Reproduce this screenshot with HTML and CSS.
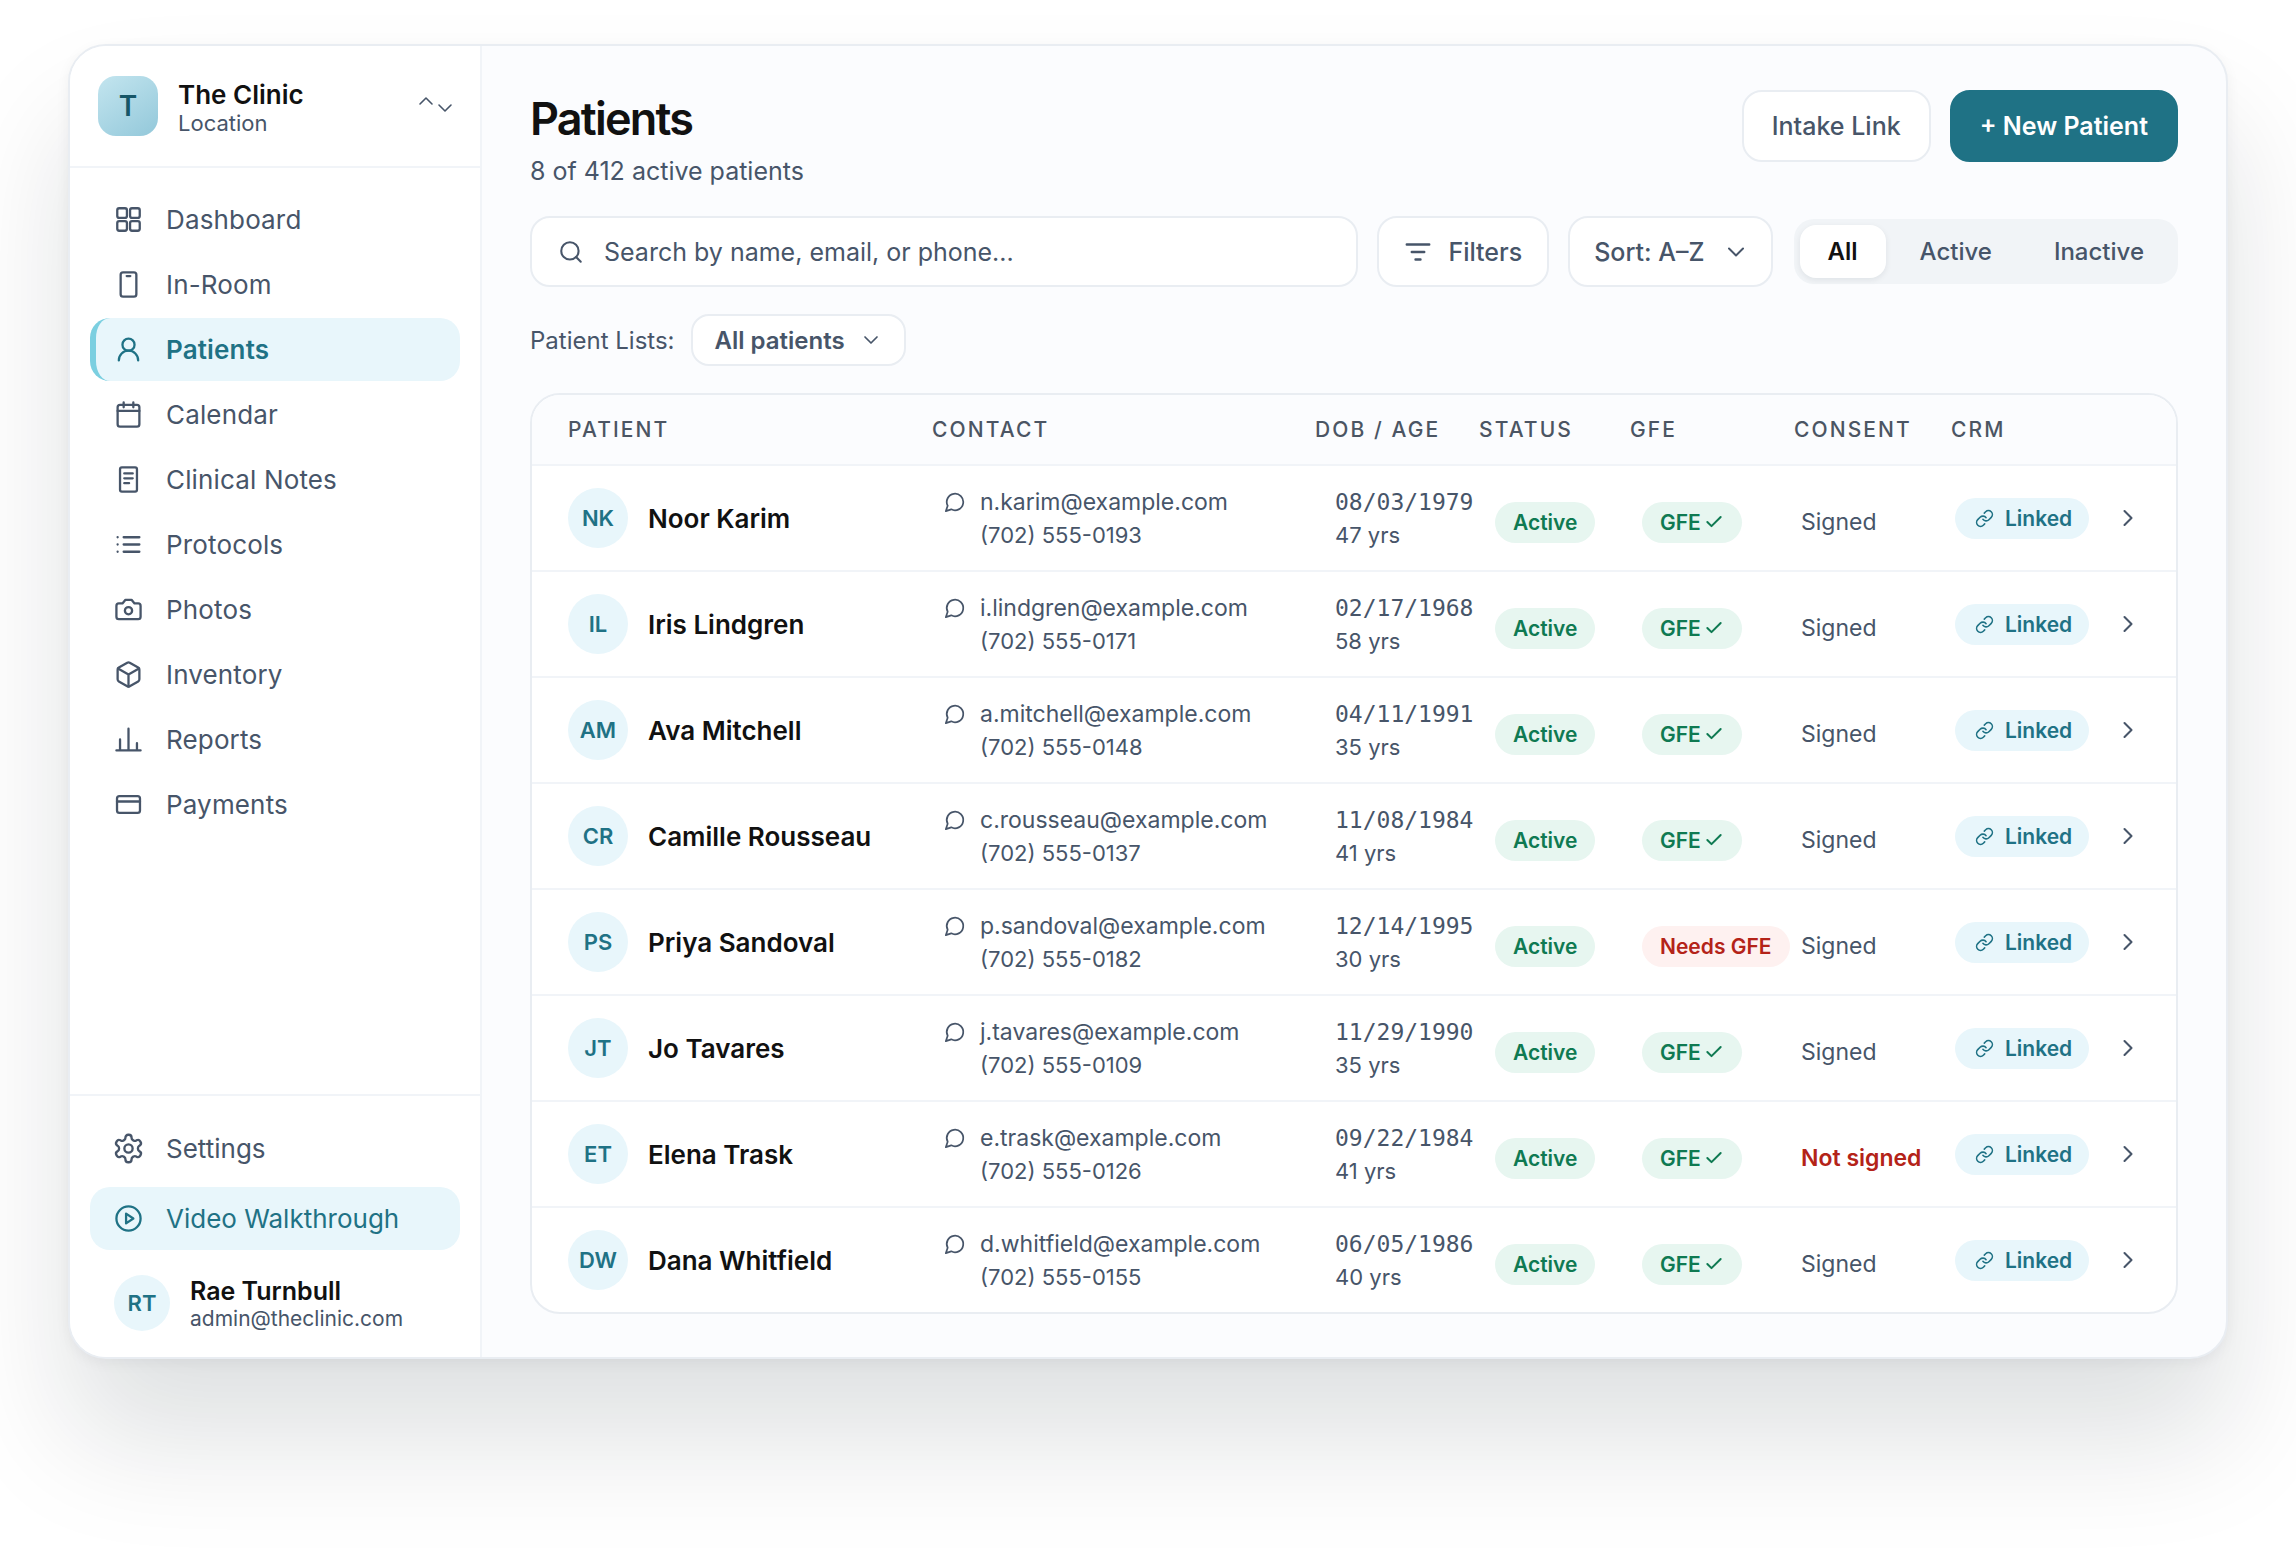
FILE: index.html
```html
<!DOCTYPE html>
<html lang="en">
<head>
    <meta charset="UTF-8">
    <meta name="viewport" content="width=device-width, initial-scale=1.0">
    <title>Patients</title>
    <link rel="stylesheet" href="styles.css">
</head>
<body>
    <svg class="sprite" xmlns="http://www.w3.org/2000/svg">
        <symbol id="i-grid" viewBox="0 0 24 24"><rect x="2.7" y="2.7" width="8" height="8" rx="1.6"/><rect x="13.3" y="2.7" width="8" height="8" rx="1.6"/><rect x="2.7" y="13.3" width="8" height="8" rx="1.6"/><rect x="13.3" y="13.3" width="8" height="8" rx="1.6"/></symbol>
        <symbol id="i-phone" viewBox="0 0 24 24"><rect x="5.5" y="2" width="13" height="20" rx="2"/><path d="M10.5 5h3"/></symbol>
        <symbol id="i-user" viewBox="0 0 24 24"><circle cx="12" cy="8" r="5"/><path d="M20 21a8 8 0 0 0-16 0"/></symbol>
        <symbol id="i-calendar" viewBox="0 0 24 24"><rect x="3" y="4" width="18" height="18" rx="2"/><path d="M8 2v4M16 2v4M3 9h18"/></symbol>
        <symbol id="i-notes" viewBox="0 0 24 24"><rect x="5" y="2" width="14" height="20" rx="1.5"/><path d="M8.5 7h7M8.5 11h7M8.5 15h4"/></symbol>
        <symbol id="i-list" viewBox="0 0 24 24"><path d="M8 6h13M8 12h13M8 18h13M3 6h.01M3 12h.01M3 18h.01"/></symbol>
        <symbol id="i-camera" viewBox="0 0 24 24"><path d="M14.5 4h-5L7 7H4a2 2 0 0 0-2 2v9a2 2 0 0 0 2 2h16a2 2 0 0 0 2-2V9a2 2 0 0 0-2-2h-3l-2.5-3z"/><circle cx="12" cy="13" r="3"/></symbol>
        <symbol id="i-box" viewBox="0 0 24 24"><path d="M21 8a2 2 0 0 0-1-1.73l-7-4a2 2 0 0 0-2 0l-7 4A2 2 0 0 0 3 8v8a2 2 0 0 0 1 1.73l7 4a2 2 0 0 0 2 0l7-4A2 2 0 0 0 21 16Z"/><path d="m3.3 7 8.7 5 8.7-5M12 22V12"/></symbol>
        <symbol id="i-bars" viewBox="0 0 24 24"><path d="M2 21h20M5 21v-9M12 21V3M19 21v-6"/></symbol>
        <symbol id="i-card" viewBox="0 0 24 24"><rect x="2.5" y="5" width="19" height="14" rx="2"/><path d="M2.5 9.5h19"/></symbol>
        <symbol id="i-gear" viewBox="0 0 24 24"><path d="M12.22 2h-.44a2 2 0 0 0-2 2v.18a2 2 0 0 1-1 1.73l-.43.25a2 2 0 0 1-2 0l-.15-.08a2 2 0 0 0-2.73.73l-.22.38a2 2 0 0 0 .73 2.73l.15.1a2 2 0 0 1 1 1.72v.51a2 2 0 0 1-1 1.74l-.15.09a2 2 0 0 0-.73 2.73l.22.38a2 2 0 0 0 2.73.73l.15-.08a2 2 0 0 1 2 0l.43.25a2 2 0 0 1 1 1.73V20a2 2 0 0 0 2 2h.44a2 2 0 0 0 2-2v-.18a2 2 0 0 1 1-1.73l.43-.25a2 2 0 0 1 2 0l.15.08a2 2 0 0 0 2.73-.73l.22-.39a2 2 0 0 0-.73-2.73l-.15-.08a2 2 0 0 1-1-1.74v-.5a2 2 0 0 1 1-1.74l.15-.09a2 2 0 0 0 .73-2.73l-.22-.38a2 2 0 0 0-2.73-.73l-.15.08a2 2 0 0 1-2 0l-.43-.25a2 2 0 0 1-1-1.73V4a2 2 0 0 0-2-2z"/><circle cx="12" cy="12" r="3"/></symbol>
        <symbol id="i-play" viewBox="0 0 24 24"><circle cx="12" cy="12" r="10"/><path d="m10 8 6 4-6 4z"/></symbol>
        <symbol id="i-search" viewBox="0 0 24 24"><circle cx="11" cy="11" r="8"/><path d="m21 21-4.3-4.3"/></symbol>
        <symbol id="i-filter" viewBox="0 0 24 24"><path d="M3 6h18M7 12h10M10 18h4"/></symbol>
        <symbol id="i-down" viewBox="0 0 24 24"><path d="m6 9 6 6 6-6"/></symbol>
        <symbol id="i-right" viewBox="0 0 24 24"><path d="m9 18 6-6-6-6"/></symbol>
        <symbol id="i-chat" viewBox="0 0 24 24"><path d="M7.9 20A9 9 0 1 0 4 16.1L2 22Z"/></symbol>
        <symbol id="i-check" viewBox="0 0 24 24"><path d="M20 6 9 17l-5-5"/></symbol>
        <symbol id="i-link" viewBox="0 0 24 24"><path d="M10 13a5 5 0 0 0 7.54.54l3-3a5 5 0 0 0-7.07-7.07l-1.72 1.71"/><path d="M14 11a5 5 0 0 0-7.54-.54l-3 3a5 5 0 0 0 7.07 7.07l1.71-1.71"/></symbol>
        <symbol id="i-updown" viewBox="0 0 36 24"><path d="m2 10 6-6 6 6M21 11l6 6 6-6"/></symbol>
    </svg>

    <div class="app">
        <aside class="sidebar">
            <div class="brand">
                <div class="brand-logo">T</div>
                <div class="brand-text">
                    <div class="brand-name">The Clinic</div>
                    <div class="brand-sub">Location</div>
                </div>
                <svg class="brand-switch"><use href="#i-updown"/></svg>
            </div>
            <nav class="nav">
                <a class="nav-item"><svg class="nav-icon"><use href="#i-grid"/></svg>Dashboard</a>
                <a class="nav-item"><svg class="nav-icon"><use href="#i-phone"/></svg>In-Room</a>
                <a class="nav-item active"><svg class="nav-icon"><use href="#i-user"/></svg>Patients</a>
                <a class="nav-item"><svg class="nav-icon"><use href="#i-calendar"/></svg>Calendar</a>
                <a class="nav-item"><svg class="nav-icon"><use href="#i-notes"/></svg>Clinical Notes</a>
                <a class="nav-item"><svg class="nav-icon"><use href="#i-list"/></svg>Protocols</a>
                <a class="nav-item"><svg class="nav-icon"><use href="#i-camera"/></svg>Photos</a>
                <a class="nav-item"><svg class="nav-icon"><use href="#i-box"/></svg>Inventory</a>
                <a class="nav-item"><svg class="nav-icon"><use href="#i-bars"/></svg>Reports</a>
                <a class="nav-item"><svg class="nav-icon"><use href="#i-card"/></svg>Payments</a>
            </nav>
            <div class="side-foot">
                <a class="nav-item"><svg class="nav-icon gear"><use href="#i-gear"/></svg>Settings</a>
                <a class="nav-item video"><svg class="nav-icon"><use href="#i-play"/></svg>Video Walkthrough</a>
                <div class="me">
                    <div class="avatar me-avatar">RT</div>
                    <div class="me-text">
                        <div class="me-name">Rae Turnbull</div>
                        <div class="me-mail">admin@theclinic.com</div>
                    </div>
                </div>
            </div>
        </aside>

        <main class="main">
            <div class="page-head">
                <div>
                    <h1>Patients</h1>
                    <p class="sub">8 of 412 active patients</p>
                </div>
                <div class="head-actions">
                    <button class="btn">Intake Link</button>
                    <button class="btn primary">+ New Patient</button>
                </div>
            </div>

            <div class="toolbar">
                <div class="search"><svg class="search-icon"><use href="#i-search"/></svg>Search by name, email, or phone...</div>
                <button class="btn filters"><svg class="filter-icon"><use href="#i-filter"/></svg>Filters</button>
                <button class="btn sort">Sort: A–Z<svg class="chev"><use href="#i-down"/></svg></button>
                <div class="segment">
                    <span class="seg on">All</span>
                    <span class="seg">Active</span>
                    <span class="seg">Inactive</span>
                </div>
            </div>

            <div class="list-row">
                <span>Patient Lists:</span>
                <button class="list-btn">All patients<svg class="chev small"><use href="#i-down"/></svg></button>
            </div>

            <div class="table">
                <div class="thead">
                    <span>Patient</span><span>Contact</span><span>DOB / Age</span><span>Status</span><span>GFE</span><span>Consent</span><span>CRM</span>
                </div>

                <div class="row">
                    <div class="who"><div class="avatar">NK</div>Noor Karim</div>
                    <div class="contact"><div class="mail"><svg class="chat"><use href="#i-chat"/></svg>n.karim@example.com</div><div class="tel">(702) 555-0193</div></div>
                    <div class="dob"><div class="mono">08/03/1979</div><div>47 yrs</div></div>
                    <div class="low"><span class="pill green">Active</span></div>
                    <div class="low"><span class="pill green">GFE<svg class="check"><use href="#i-check"/></svg></span></div>
                    <div class="low signed">Signed</div>
                    <div><span class="pill linked"><svg class="link"><use href="#i-link"/></svg>Linked</span></div>
                    <svg class="go"><use href="#i-right"/></svg>
                </div>
                <div class="row">
                    <div class="who"><div class="avatar">IL</div>Iris Lindgren</div>
                    <div class="contact"><div class="mail"><svg class="chat"><use href="#i-chat"/></svg>i.lindgren@example.com</div><div class="tel">(702) 555-0171</div></div>
                    <div class="dob"><div class="mono">02/17/1968</div><div>58 yrs</div></div>
                    <div class="low"><span class="pill green">Active</span></div>
                    <div class="low"><span class="pill green">GFE<svg class="check"><use href="#i-check"/></svg></span></div>
                    <div class="low signed">Signed</div>
                    <div><span class="pill linked"><svg class="link"><use href="#i-link"/></svg>Linked</span></div>
                    <svg class="go"><use href="#i-right"/></svg>
                </div>
                <div class="row">
                    <div class="who"><div class="avatar">AM</div>Ava Mitchell</div>
                    <div class="contact"><div class="mail"><svg class="chat"><use href="#i-chat"/></svg>a.mitchell@example.com</div><div class="tel">(702) 555-0148</div></div>
                    <div class="dob"><div class="mono">04/11/1991</div><div>35 yrs</div></div>
                    <div class="low"><span class="pill green">Active</span></div>
                    <div class="low"><span class="pill green">GFE<svg class="check"><use href="#i-check"/></svg></span></div>
                    <div class="low signed">Signed</div>
                    <div><span class="pill linked"><svg class="link"><use href="#i-link"/></svg>Linked</span></div>
                    <svg class="go"><use href="#i-right"/></svg>
                </div>
                <div class="row">
                    <div class="who"><div class="avatar">CR</div>Camille Rousseau</div>
                    <div class="contact"><div class="mail"><svg class="chat"><use href="#i-chat"/></svg>c.rousseau@example.com</div><div class="tel">(702) 555-0137</div></div>
                    <div class="dob"><div class="mono">11/08/1984</div><div>41 yrs</div></div>
                    <div class="low"><span class="pill green">Active</span></div>
                    <div class="low"><span class="pill green">GFE<svg class="check"><use href="#i-check"/></svg></span></div>
                    <div class="low signed">Signed</div>
                    <div><span class="pill linked"><svg class="link"><use href="#i-link"/></svg>Linked</span></div>
                    <svg class="go"><use href="#i-right"/></svg>
                </div>
                <div class="row">
                    <div class="who"><div class="avatar">PS</div>Priya Sandoval</div>
                    <div class="contact"><div class="mail"><svg class="chat"><use href="#i-chat"/></svg>p.sandoval@example.com</div><div class="tel">(702) 555-0182</div></div>
                    <div class="dob"><div class="mono">12/14/1995</div><div>30 yrs</div></div>
                    <div class="low"><span class="pill green">Active</span></div>
                    <div class="low"><span class="pill red">Needs GFE</span></div>
                    <div class="low signed">Signed</div>
                    <div><span class="pill linked"><svg class="link"><use href="#i-link"/></svg>Linked</span></div>
                    <svg class="go"><use href="#i-right"/></svg>
                </div>
                <div class="row">
                    <div class="who"><div class="avatar">JT</div>Jo Tavares</div>
                    <div class="contact"><div class="mail"><svg class="chat"><use href="#i-chat"/></svg>j.tavares@example.com</div><div class="tel">(702) 555-0109</div></div>
                    <div class="dob"><div class="mono">11/29/1990</div><div>35 yrs</div></div>
                    <div class="low"><span class="pill green">Active</span></div>
                    <div class="low"><span class="pill green">GFE<svg class="check"><use href="#i-check"/></svg></span></div>
                    <div class="low signed">Signed</div>
                    <div><span class="pill linked"><svg class="link"><use href="#i-link"/></svg>Linked</span></div>
                    <svg class="go"><use href="#i-right"/></svg>
                </div>
                <div class="row">
                    <div class="who"><div class="avatar">ET</div>Elena Trask</div>
                    <div class="contact"><div class="mail"><svg class="chat"><use href="#i-chat"/></svg>e.trask@example.com</div><div class="tel">(702) 555-0126</div></div>
                    <div class="dob"><div class="mono">09/22/1984</div><div>41 yrs</div></div>
                    <div class="low"><span class="pill green">Active</span></div>
                    <div class="low"><span class="pill green">GFE<svg class="check"><use href="#i-check"/></svg></span></div>
                    <div class="low not-signed">Not signed</div>
                    <div><span class="pill linked"><svg class="link"><use href="#i-link"/></svg>Linked</span></div>
                    <svg class="go"><use href="#i-right"/></svg>
                </div>
                <div class="row">
                    <div class="who"><div class="avatar">DW</div>Dana Whitfield</div>
                    <div class="contact"><div class="mail"><svg class="chat"><use href="#i-chat"/></svg>d.whitfield@example.com</div><div class="tel">(702) 555-0155</div></div>
                    <div class="dob"><div class="mono">06/05/1986</div><div>40 yrs</div></div>
                    <div class="low"><span class="pill green">Active</span></div>
                    <div class="low"><span class="pill green">GFE<svg class="check"><use href="#i-check"/></svg></span></div>
                    <div class="low signed">Signed</div>
                    <div><span class="pill linked"><svg class="link"><use href="#i-link"/></svg>Linked</span></div>
                    <svg class="go"><use href="#i-right"/></svg>
                </div>
            </div>
        </main>
    </div>
</body>
</html>
```

FILE: styles.css
```css
* {
    box-sizing: border-box;
}
body {
    margin: 0;
    padding: 44px 68px 0;
    height: 1564px;
    overflow: hidden;
    background-color: #fff;
    font-family: Inter, "Noto Sans", sans-serif;
    color: #475569;
}
svg {
    fill: none;
    stroke: currentColor;
    stroke-width: 1.9;
    stroke-linecap: round;
    stroke-linejoin: round;
    flex: none;
}
.sprite {
    position: absolute;
    width: 0;
    height: 0;
}
.app {
    display: flex;
    width: 2160px;
    height: 1315px;
    background-color: #fbfcfe;
    border: 2px solid #e9edf2;
    border-radius: 38px;
    box-shadow: 0 80px 120px rgba(10, 20, 30, 0.13), 0 4px 14px rgba(15, 23, 42, 0.05);
    overflow: hidden;
}

/* sidebar */
.sidebar {
    width: 412px;
    flex: none;
    display: flex;
    flex-direction: column;
    background-color: #fff;
    border-right: 2px solid #f1f4f8;
}
.brand {
    height: 122px;
    flex: none;
    display: flex;
    align-items: center;
    padding: 0 26px 0 28px;
    border-bottom: 2px solid #f1f4f8;
}
.brand-logo {
    width: 60px;
    height: 60px;
    border-radius: 18px;
    background: linear-gradient(145deg, #c3e5ef, #93c8da);
    color: #175667;
    font-size: 28px;
    font-weight: 600;
    display: flex;
    align-items: center;
    justify-content: center;
}
.brand-text {
    margin-left: 20px;
    padding-top: 4px;
    flex: 1;
}
.brand-name {
    font-size: 26px;
    font-weight: 600;
    line-height: 30px;
    color: #111;
}
.brand-sub {
    font-size: 22px;
    line-height: 27px;
}
.brand-switch {
    width: 36px;
    height: 24px;
    stroke-width: 1.6;
}
.nav {
    padding: 20px 20px 0;
    display: flex;
    flex-direction: column;
    gap: 2px;
}
.nav-item {
    height: 63px;
    display: flex;
    align-items: center;
    gap: 23px;
    padding-left: 18px;
    border-left: 6px solid transparent;
    border-radius: 20px;
    font-size: 26px;
    letter-spacing: 0.15px;
    color: #475569;
}
.side-foot .nav-item {
    letter-spacing: 0;
}
.nav-icon {
    width: 29px;
    height: 29px;
}
.nav-icon.gear {
    width: 33px;
    height: 33px;
    margin: 0 -2px;
    stroke-width: 1.7;
}
.nav-item.active {
    border-left-color: #7bcfe0;
    background-color: #e8f6fb;
    color: #1f7285;
    font-weight: 600;
}
.nav-item.video {
    background-color: #e8f6fb;
    color: #1f7285;
}
.side-foot {
    margin-top: auto;
    padding: 21px 20px 0;
    height: 263px;
    border-top: 2px solid #f1f4f8;
    display: flex;
    flex-direction: column;
    gap: 7px;
}
.me {
    display: flex;
    align-items: center;
    gap: 20px;
    padding: 17px 0 0 24px;
}
.me-text {
    padding-top: 3px;
}
.me-name {
    font-size: 25px;
    font-weight: 600;
    line-height: 29px;
    color: #111;
}
.me-mail {
    font-size: 21px;
    line-height: 26px;
}
.avatar {
    width: 60px;
    height: 60px;
    flex: none;
    border-radius: 50%;
    background-color: #e8f6fb;
    color: #1f7285;
    font-size: 22px;
    font-weight: 600;
    display: flex;
    align-items: center;
    justify-content: center;
}
.me-avatar {
    width: 56px;
    height: 56px;
}

/* main */
.main {
    flex: 1;
    min-width: 0;
    padding: 44px 48px 0;
}
.page-head {
    height: 102px;
    margin-bottom: 24px;
    display: flex;
    justify-content: space-between;
}
h1 {
    margin: 0;
    font-size: 45px;
    line-height: 58px;
    font-weight: 600;
    letter-spacing: -1.8px;
    color: #111;
}
.sub {
    margin: 6px 0 0;
    font-size: 25px;
    line-height: 34px;
}
.head-actions {
    display: flex;
    gap: 19px;
}
.btn {
    height: 72px;
    padding: 0 28px;
    display: flex;
    align-items: center;
    background-color: #fff;
    border: 2px solid #e9edf2;
    border-radius: 20px;
    font: 500 25px Inter, sans-serif;
    color: #475569;
}
.btn.primary {
    background-color: #1f7285;
    border-color: #1f7285;
    color: #fff;
    font-weight: 600;
}
.toolbar {
    display: flex;
    align-items: center;
    gap: 19px;
    margin-bottom: 27px;
}
.search {
    flex: 1;
    height: 71px;
    display: flex;
    align-items: center;
    gap: 20px;
    padding-left: 26px;
    background-color: #fff;
    border: 2px solid #e9edf2;
    border-radius: 20px;
    font-size: 25px;
}
.search-icon {
    width: 26px;
    height: 26px;
}
.filters {
    gap: 15px;
    height: 71px;
    padding: 0 25px 0 24px;
}
.filter-icon {
    width: 30px;
    height: 30px;
}
.sort {
    gap: 17px;
    height: 71px;
    padding: 0 21px 0 24px;
}
.chev {
    width: 28px;
    height: 28px;
    stroke-width: 1.7;
}
.chev.small {
    width: 24px;
    height: 24px;
}
.segment {
    display: flex;
    gap: 6px;
    margin-left: 2px;
    padding: 6px;
    height: 65px;
    background-color: #f1f4f7;
    border-radius: 20px;
}
.seg {
    display: flex;
    align-items: center;
    padding: 0 28px;
    font-size: 24px;
    font-weight: 500;
    border-radius: 16px;
}
.seg.on {
    background-color: #fff;
    color: #111;
    font-weight: 600;
    box-shadow: 0 2px 6px rgba(15, 23, 42, 0.08);
}
.list-row {
    display: flex;
    align-items: center;
    gap: 16px;
    margin-bottom: 27px;
    font-size: 24px;
}
.list-btn {
    height: 52px;
    padding: 0 21px 0 22px;
    display: flex;
    align-items: center;
    gap: 14px;
    background-color: #fff;
    border: 2px solid #e9edf2;
    border-radius: 18px;
    font: 600 24px Inter, sans-serif;
    color: #475569;
}

/* table */
.table {
    background-color: #fff;
    border: 2px solid #e9edf2;
    border-radius: 30px;
    overflow: hidden;
}
.thead {
    height: 71px;
    display: grid;
    grid-template-columns: 364px 383px 164px 151px 164px 157px 1fr;
    align-items: center;
    padding-left: 36px;
    background-color: #fbfcfe;
    border-bottom: 2px solid #f1f4f8;
    font-size: 21px;
    font-weight: 500;
    letter-spacing: 2.1px;
    text-transform: uppercase;
    color: #4b5563;
}
.row {
    height: 106px;
    display: grid;
    grid-template-columns: 376px 391px 160px 147px 159px 154px 159px 1fr;
    align-items: center;
    padding-left: 36px;
    border-bottom: 2px solid #f1f4f8;
}
.row:last-child {
    height: 104px;
    border-bottom: 0;
}
.who {
    display: flex;
    align-items: center;
    gap: 20px;
    font-size: 26px;
    font-weight: 600;
    color: #111;
}
.contact, .dob {
    padding-top: 1px;
    font-size: 22px;
    line-height: 32px;
}
.mail {
    display: flex;
    align-items: center;
    gap: 14px;
    font-size: 23px;
}
.chat {
    width: 22px;
    height: 22px;
}
.tel {
    padding: 1px 0 0 36px;
}
.mono {
    font-family: "DejaVu Sans Mono", monospace;
    font-size: 23px;
    margin-bottom: 1px;
}
.low {
    padding-top: 8px;
}
.pill {
    display: inline-flex;
    align-items: center;
    height: 41px;
    padding: 0 18px;
    border-radius: 21px;
    font-size: 21px;
    font-weight: 600;
}
.green {
    background-color: #e7f6f0;
    color: #0f7a52;
}
.red {
    background-color: #fef1f0;
    color: #b42318;
}
.linked {
    gap: 11px;
    padding: 0 17px 0 20px;
    background-color: #e8f6fb;
    color: #1f7285;
}
.check {
    width: 20px;
    height: 20px;
    margin-left: 3px;
    stroke-width: 2.4;
}
.link {
    width: 19px;
    height: 19px;
    stroke-width: 2;
}
.signed, .not-signed {
    font-size: 23px;
}
.not-signed {
    color: #b42318;
    font-weight: 600;
}
.go {
    width: 28px;
    height: 28px;
    color: #475569;
    stroke-width: 1.8;
}
```
